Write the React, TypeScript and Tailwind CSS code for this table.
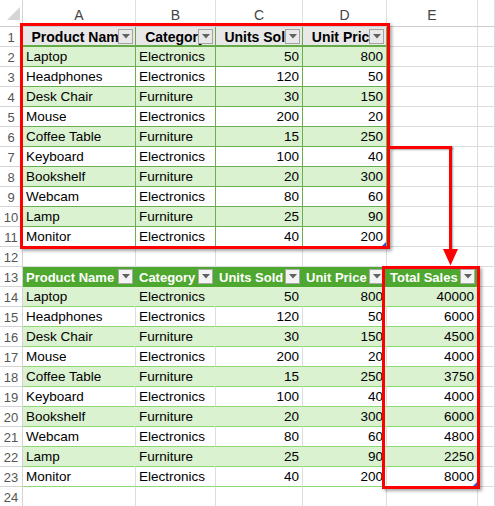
import React from 'react';

const products: [string, string, number, number][] = [
  ['Laptop', 'Electronics', 50, 800],
  ['Headphones', 'Electronics', 120, 50],
  ['Desk Chair', 'Furniture', 30, 150],
  ['Mouse', 'Electronics', 200, 20],
  ['Coffee Table', 'Furniture', 15, 250],
  ['Keyboard', 'Electronics', 100, 40],
  ['Bookshelf', 'Furniture', 20, 300],
  ['Webcam', 'Electronics', 80, 60],
  ['Lamp', 'Furniture', 25, 90],
  ['Monitor', 'Electronics', 40, 200],
];

// widths: row header, A, B, C, D, E, F
const W = ['w-[23px]', 'w-[113px]', 'w-[80px]', 'w-[87px]', 'w-[84px]', 'w-[91px]', 'flex-1'];

const grid = 'border-r border-b border-[#dcdcdc]';

function FilterBtn({ light }: { light?: boolean }) {
  return (
    <div
      className={`absolute right-[2px] top-[2px] w-[15px] h-[15px] border flex items-center justify-center ${
        light ? 'bg-[#f3f3f3] border-[#a9a9a9]' : 'bg-[#e9e9e9] border-[#a3a3a3]'
      }`}
    >
      <svg width="8" height="5" viewBox="0 0 8 5">
        <polygon points="0,0 8,0 4,4.5" fill="#616161" />
      </svg>
    </div>
  );
}

function Corner() {
  return <div className="absolute right-0 bottom-0 w-0 h-0 border-l-[4px] border-l-transparent border-b-[4px] border-b-[#2f52c4]" />;
}

function RowNum({ n }: { n: number }) {
  return (
    <div className={`${W[0]} h-[20px] shrink-0 border-r border-b border-[#d4d4d4] flex items-center justify-center pt-[2px] text-[13px] text-[#555]`}>
      {n}
    </div>
  );
}

function Blank({ c }: { c: number }) {
  return <div className={`${W[c]} h-full shrink-0 ${grid}`} />;
}

export default function App() {
  return (
    <div className="relative w-[495px] h-[506px] overflow-hidden bg-white font-['Liberation_Sans',Arial,sans-serif] text-[13.5px] text-black">
      {/* column headers */}
      <div className="flex h-[27px] border-b border-[#cfcfcf]">
        <div className={`${W[0]} shrink-0 relative border-r border-[#d4d4d4]`}>
          <svg className="absolute left-0 top-0" width="22" height="26" viewBox="0 0 22 26">
            <polygon points="20,7 20,20 7,20" fill="#d6d6d6" />
          </svg>
        </div>
        {['A', 'B', 'C', 'D', 'E', ''].map((l, i) => (
          <div key={i} className={`${W[i + 1]} shrink-0 border-r border-[#e0e0e0] flex items-center justify-center pt-[4px] text-[14px] text-[#444]`}>
            {l}
          </div>
        ))}
      </div>

      {/* row 1 - top table header */}
      <div className="flex h-[20px]">
        <RowNum n={1} />
        {['Product Name', 'Category', 'Units Sold', 'Unit Price'].map((t, i) => (
          <div
            key={t}
            className={`${W[i + 1]} shrink-0 relative overflow-hidden whitespace-nowrap bg-[#e8e8e8] border-r border-b-2 border-[#64ab47] flex items-center justify-center pt-[2px] font-bold text-[14px]`}
          >
            {t}
            <FilterBtn />
          </div>
        ))}
        <Blank c={5} />
        <Blank c={6} />
      </div>

      {/* rows 2-11 */}
      {products.map((p, i) => (
        <div key={p[0]} className="flex h-[20px]">
          <RowNum n={i + 2} />
          {p.map((v, j) => (
            <div
              key={j}
              className={`${W[j + 1]} shrink-0 relative overflow-hidden whitespace-nowrap px-[3px] pt-[2px] border-r border-b border-[#6aae4f] flex items-center ${
                i % 2 === 0 ? 'bg-[#daf2d0]' : 'bg-white'
              } ${typeof v === 'number' ? 'justify-end' : ''}`}
            >
              {v}
              {i === 9 && j === 3 && <Corner />}
            </div>
          ))}
          <Blank c={5} />
          <Blank c={6} />
        </div>
      ))}

      {/* row 12 */}
      <div className="flex h-[20px]">
        <RowNum n={12} />
        {[1, 2, 3, 4, 5, 6].map((c) => (
          <Blank key={c} c={c} />
        ))}
      </div>

      {/* row 13 - bottom table header */}
      <div className="flex h-[20px]">
        <RowNum n={13} />
        {['Product Name', 'Category', 'Units Sold', 'Unit Price', 'Total Sales'].map((t, i) => (
          <div
            key={t}
            className={`${W[i + 1]} shrink-0 relative overflow-hidden whitespace-nowrap px-[3px] pt-[2px] bg-[#4ea72e] border-r border-b border-transparent flex items-center font-bold text-[13px] text-white`}
          >
            {t}
            <FilterBtn light />
          </div>
        ))}
        <Blank c={6} />
      </div>

      {/* rows 14-23 */}
      {products.map((p, i) => {
        const band = i % 2 === 0;
        const vals: (string | number)[] = [...p, p[2] * p[3]];
        return (
          <div key={p[0]} className="flex h-[20px]">
            <RowNum n={i + 14} />
            {vals.map((v, j) => (
              <div
                key={j}
                className={`${W[j + 1]} shrink-0 relative overflow-hidden whitespace-nowrap px-[3px] pt-[2px] border-r border-b border-b-[#8ed973] flex items-center ${
                  band ? 'bg-[#daf2d0] border-r-transparent' : 'bg-white border-r-[#dcdcdc]'
                } ${typeof v === 'number' ? 'justify-end' : ''}`}
              >
                {v}
                {i === 9 && j === 4 && <Corner />}
              </div>
            ))}
            <Blank c={6} />
          </div>
        );
      })}

      {/* row 24 */}
      <div className="flex h-[20px]">
        <RowNum n={24} />
        {[1, 2, 3, 4, 5, 6].map((c) => (
          <Blank key={c} c={c} />
        ))}
      </div>

      {/* annotations */}
      <div className="absolute left-[20px] top-[23px] w-[370px] h-[226px] border-[3px] border-[#ff0000] shadow-[2px_2px_3px_rgba(0,0,0,0.35)] pointer-events-none" />
      <div className="absolute left-[382px] top-[266px] w-[98px] h-[223px] border-[3px] border-[#ff0000] shadow-[2px_2px_3px_rgba(0,0,0,0.35)] pointer-events-none" />
      <div className="absolute left-[390px] top-[146px] w-[62px] h-[3px] bg-[#ff0000] shadow-[1px_1px_2px_rgba(0,0,0,0.35)]" />
      <div className="absolute left-[449px] top-[146px] w-[3px] h-[106px] bg-[#ff0000] shadow-[1px_1px_2px_rgba(0,0,0,0.35)]" />
      <svg className="absolute left-[443px] top-[249px]" width="15" height="17" viewBox="0 0 15 17">
        <polygon points="0,0 15,0 7.5,16.5" fill="#ff0000" />
      </svg>
    </div>
  );
}
